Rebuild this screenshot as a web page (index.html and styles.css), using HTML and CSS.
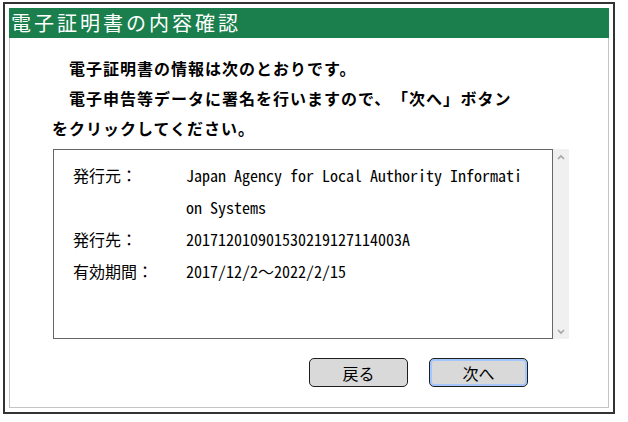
FILE: index.html
```html
<!DOCTYPE html>
<html lang="ja">
<head>
  <meta charset="UTF-8">
  <title>電子証明書の内容確認</title>
  <link rel="stylesheet" href="styles.css">
</head>
<body>
  <div class="dialog">
    <h1 class="title">電子証明書の内容確認</h1>
    <div class="panel">
      <p class="message">電子証明書の情報は次のとおりです。</p>
      <p class="message">電子申告等データに署名を行いますので、 「次へ」 ボタン<br>をクリックしてください。</p>

      <div class="cert-area">
        <div class="cert-box">
          <div class="cert-row">
            <span class="cert-label">発行元：</span>
            <span class="cert-value">Japan Agency for Local Authority Information Systems</span>
          </div>
          <div class="cert-row">
            <span class="cert-label">発行先：</span>
            <span class="cert-value">201712010901530219127114003A</span>
          </div>
          <div class="cert-row">
            <span class="cert-label">有効期間：</span>
            <span class="cert-value">2017/12/2<span class="wide">～</span>2022/2/15</span>
          </div>
        </div>
        <div class="scrollbar">
          <svg width="16" height="16" viewBox="0 0 16 16"><path d="M5 10 L8 7 L11 10" fill="none" stroke="#a6a6a6" stroke-width="1.6"/></svg>
          <svg width="16" height="16" viewBox="0 0 16 16"><path d="M5 7 L8 10 L11 7" fill="none" stroke="#a6a6a6" stroke-width="1.6"/></svg>
        </div>
      </div>

      <div class="buttons">
        <button class="btn">戻る</button>
        <button class="btn btn-focus">次へ</button>
      </div>
    </div>
  </div>
</body>
</html>
```

FILE: styles.css
```css
body {
  margin: 0;
  font-family: "Noto Sans CJK JP", sans-serif;
  color: #000;
  background: #fff;
}
.dialog {
  box-sizing: border-box;
  width: 612px;
  height: 412px;
  margin: 2px 0 0 3px;
  padding: 4px;
  border: 2px solid #333;
  display: flex;
  flex-direction: column;
}
.title {
  margin: 0;
  height: 30px;
  padding-left: 2px;
  background-color: #1a7f4c;
  color: #fff;
  font-size: 20px;
  font-weight: normal;
  letter-spacing: 3px;
  line-height: 30px;
}
.panel {
  flex: 1;
  border: 1px solid #c4c4c4;
  border-top: none;
  padding-top: 15px;
}
.message {
  margin: 0;
  padding-left: 42px;
  text-indent: 17px;
  font-size: 16px;
  font-weight: bold;
  letter-spacing: 1px;
  word-spacing: -4px;
  line-height: 30px;
  white-space: nowrap;
}
.cert-area {
  display: flex;
  margin: 6px 0 0 43px;
  width: 516px;
  height: 190px;
}
.cert-box {
  flex: 1;
  border: 1px solid #666;
  padding: 9px 0 0 19px;
}
.cert-row {
  display: flex;
  font-size: 16px;
  line-height: 32px;
}
.cert-label {
  width: 113px;
  flex: none;
}
.cert-value {
  width: 340px;
  word-break: break-all;
  font-feature-settings: "hwid" 1;
}
.cert-value .wide {
  font-feature-settings: normal;
}
.scrollbar {
  width: 16px;
  background-color: #f0f0f0;
  display: flex;
  flex-direction: column;
  justify-content: space-between;
}
.scrollbar svg {
  display: block;
}
.buttons {
  display: flex;
  justify-content: flex-end;
  gap: 21px;
  margin-top: 19px;
  padding-right: 80px;
}
.btn {
  width: 99px;
  height: 29px;
  background-color: #d9d9d9;
  border: 1px solid #1e1e1e;
  border-radius: 5px;
  font-family: "Noto Sans CJK JP", sans-serif;
  font-size: 16px;
  color: #000;
  padding: 0;
}
.btn-focus {
  box-shadow: inset 0 0 0 2px #a3c6ff;
}
```
